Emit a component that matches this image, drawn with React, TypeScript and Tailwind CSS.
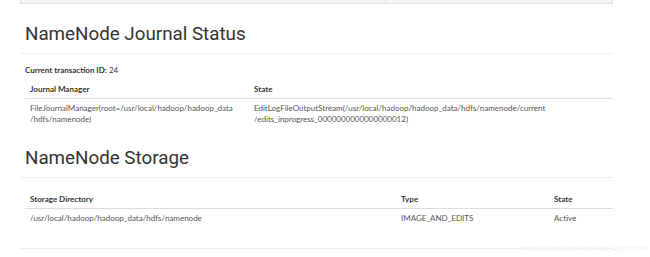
import React from "react";

export default function App() {
  const body = { fontFamily: "Lato, 'Open Sans', sans-serif" };
  const head = { fontFamily: "Roboto, 'Liberation Sans', Arial, sans-serif" };
  return (
    <div className="relative w-[650px] h-[257px] overflow-hidden bg-white text-[#333]" style={body}>
      <div className="pl-[20px] w-[613px]">
        {/* bottom of previous table */}
        <div className="h-[4px] border-x border-b border-[#e2e2e2] bg-[#f4f4f4] flex">
          <div className="w-[365px] border-r border-[#e2e2e2]" />
        </div>

        <h1 className="pl-[5px] mt-[17px] text-[18.8px] leading-[26px] text-[#333]" style={head}>
          NameNode Journal Status
        </h1>
        <div className="mt-[6px] border-t border-[#eee]" />

        <p className="pl-[5px] mt-[11px] text-[8px] leading-[11px]">
          <b className="font-bold">Current transaction ID:</b> 24
        </p>

        <div className="pl-[5px] mt-[5px] text-[8px] leading-[11px]">
          <div className="flex font-bold border-b border-[#ddd] pt-[3px] pb-[3px] pl-[5px]">
            <div className="w-[224px]">Journal Manager</div>
            <div>State</div>
          </div>
          <div className="flex pt-[4px] pl-[5px] text-[#555]">
            <div className="w-[224px]">
              FileJournalManager(root=/usr/local/hadoop/hadoop_data
              <br />
              /hdfs/namenode)
            </div>
            <div>
              EditLogFileOutputStream(/usr/local/hadoop/hadoop_data/hdfs/namenode/current
              <br />
              /edits_inprogress_0000000000000000012)
            </div>
          </div>
        </div>

        <h1 className="pl-[5px] mt-[20px] text-[18.8px] leading-[26px] text-[#333]" style={head}>
          NameNode Storage
        </h1>
        <div className="mt-[6px] border-t border-[#eee]" />

        <div className="pl-[5px] mt-[13px] text-[8px] leading-[11px]">
          <div className="flex font-bold border-b border-[#ddd] pt-[3px] pb-[3px] pl-[5px]">
            <div className="w-[371px]">Storage Directory</div>
            <div className="w-[153px]">Type</div>
            <div>State</div>
          </div>
          <div className="flex pt-[4px] pl-[5px] text-[#555]">
            <div className="w-[371px]">/usr/local/hadoop/hadoop_data/hdfs/namenode</div>
            <div className="w-[153px]">IMAGE_AND_EDITS</div>
            <div>Active</div>
          </div>
        </div>

        <div className="mt-[24px] border-t border-[#eee]" />
      </div>

      <div className="absolute left-[521px] top-[243px] text-[8px] text-[#f0f0f0] whitespace-nowrap" style={head}>
        https://blog.csdn.net/qq_33359379
      </div>
    </div>
  );
}
